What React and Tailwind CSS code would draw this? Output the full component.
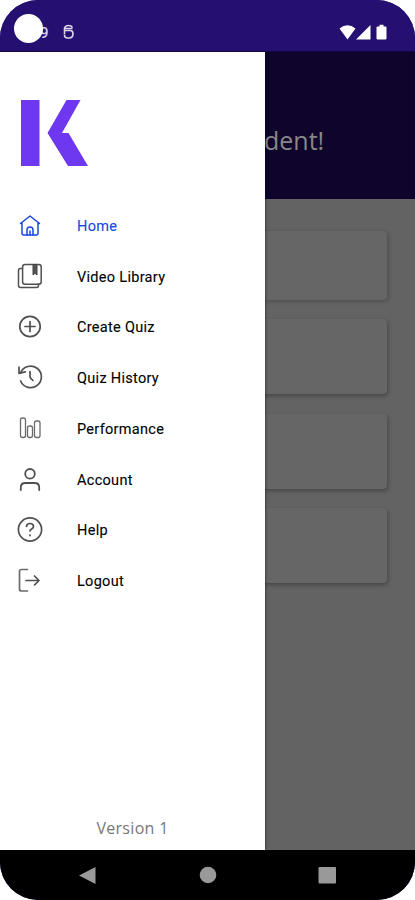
const icons = {
  home: (
    <g stroke="#1747dc" strokeWidth="1.5">
      <path d="M5.5 12.5 15 5l9.5 7.5M7 12v10.5q0 1.5 1.5 1.5h13q1.5 0 1.5-1.5V12" />
      <path d="M12 24v-5q0-3 3-3t3 3v5M15 20v4" />
    </g>
  ),
  library: (
    <g strokeWidth="1.5">
      <rect x="7.6" y="2.6" width="18.6" height="19.6" rx="2.5" />
      <path d="M7.5 6.5H5.5q-2 0-2 2v15q0 2 2 2h16q2 0 2-2v-1.5" />
      <path d="M18 3v10l2-1.7 2 1.7V3z" fill="#555" stroke="#444" strokeWidth="1" />
    </g>
  ),
  create: (
    <g strokeWidth="1.7">
      <circle cx="15" cy="14.5" r="10.2" />
      <path d="M10 14.5h10M15 9.5v10" />
    </g>
  ),
  history: (
    <g strokeWidth="1.7">
      <path d="M5.5 10A10.800 10.800 0 1 1 5.600 18" />
      <path d="M4 4v6.300l6.300-1.500" />
      <path d="M15 8.500v5q0 1 .8 1.800l2.200 2.200" />
    </g>
  ),
  performance: (
    <g strokeWidth="1.3" stroke="#6b6b6b">
      <rect x="5.5" y="4" width="5" height="19.5" rx="2" />
      <rect x="12.5" y="12" width="5" height="11.5" rx="2" />
      <rect x="19.5" y="7" width="5.5" height="16.5" rx="2" />
    </g>
  ),
  account: (
    <g strokeWidth="1.8">
      <circle cx="15" cy="8.8" r="4.8" />
      <path d="M5.8 25v-2.500q0-4.500 4.500-4.500h9.400q4.500 0 4.500 4.500V25" />
    </g>
  ),
  help: (
    <g strokeWidth="1.7">
      <circle cx="15" cy="14.5" r="11.6" />
      <path d="M11.500 11.500q.3-3 3.500-3 3.500 0 3.500 2.800 0 1.700-1.800 2.700-1.700 1-1.700 2" />
      <path d="M15 20v.6" />
    </g>
  ),
  logout: (
    <g strokeWidth="1.7">
      <path d="M12.500 3.500h-6q-2 0-2 2v17.500q0 2 2 2h6" stroke="#6b6b6b" />
      <path d="M11 14.500h13M19.500 10l4.500 4.500-4.500 4.500" />
    </g>
  ),
};

const menu = [
  { label: "Home", icon: "home", active: true },
  { label: "Video Library", icon: "library" },
  { label: "Create Quiz", icon: "create" },
  { label: "Quiz History", icon: "history" },
  { label: "Performance", icon: "performance" },
  { label: "Account", icon: "account" },
  { label: "Help", icon: "help" },
  { label: "Logout", icon: "logout" },
];

function MenuItem({ item }) {
  return (
    <li className="flex h-[50.75px] items-center pl-[15px]">
      <svg viewBox="0 0 30 30" className="h-[30px] w-[30px] shrink-0" fill="none" stroke="#505050" strokeLinecap="round" strokeLinejoin="round">
        {icons[item.icon]}
      </svg>
      <span className={`ml-8 pt-0.5 font-['Roboto',sans-serif] text-[14.5px] leading-5 tracking-[0.3px] [-webkit-text-stroke-width:0.1px] ${item.active ? "text-[#1747dc]" : "text-black"}`}>
        {item.label}
      </span>
    </li>
  );
}

function StatusBar() {
  return (
    <header className="flex h-[51px] shrink-0 items-start justify-between bg-[#250f70]">
      <svg viewBox="0 0 100 51" className="h-[51px] w-[100px]" fill="white">
        <text x="40" y="38" className="font-['Roboto',sans-serif] text-[15px] font-medium" fill="#d6d0ec">9</text>
        <circle cx="28.5" cy="28.5" r="14.5" />
        <path d="M72.500 27.500q-1-2-4-2t-4 2.500v2.500h6q2.500 0 2.500 3.500t-3 4h-2.500q-3 0-3-3M64.500 31v3.500M64.500 28.500h8" fill="none" stroke="#d9d4ea" strokeWidth="1.6" />
      </svg>
      <svg viewBox="335 0 80 51" className="h-[51px] w-20" fill="white">
        <path d="M339.500 28.500q8-6.500 16 0l-8 11z" />
        <path d="M370.500 25v14.500h-14.500z" />
        <path d="M377.500 26.500h2v-1.800h4v1.800h2q1 0 1 1v11q0 1-1 1h-8q-1 0-1-1v-11q0-1 1-1z" />
      </svg>
    </header>
  );
}

function Drawer() {
  return (
    <nav className="z-10 flex w-[265px] shrink-0 flex-col bg-white shadow-[0_0_3px_rgba(0,0,0,0.65)]">
      <svg viewBox="0 0 68 68" className="mt-12 ml-[21px] h-[68px] w-[68px]" fill="#6d38f0">
        <path d="M0 0h18.500v66H0zM45.500 0h14L41 33h6.500l19.500 33H47L26.500 33z" />
      </svg>
      <ul className="mt-[32.6px]">
        {menu.map((item) => <MenuItem key={item.label} item={item} />)}
      </ul>
      <p className="mt-auto mb-[10px] text-center font-['Open_Sans',sans-serif] text-[16px] leading-6 tracking-[0.3px] text-[#777]">Version 1</p>
    </nav>
  );
}

function Page() {
  return (
    <main className="min-w-0 flex-1 overflow-hidden bg-[#636363]">
      <div className="flex h-[147px] items-center bg-[#0e042c] pt-[29px]">
        <span className="-ml-px font-['Open_Sans',sans-serif] text-[25px] leading-none text-[#888]">dent!</span>
      </div>
      <div className="-ml-4 flex w-[138px] flex-col gap-[19.3px] pt-8">
        <div className="h-[69px] rounded bg-[#666] shadow-[1px_1px_4px_rgba(0,0,0,0.25)]" />
        <div className="h-[75px] rounded bg-[#666] shadow-[1px_2px_4px_rgba(0,0,0,0.3)]" />
        <div className="h-[75px] rounded bg-[#666] shadow-[1px_2px_4px_rgba(0,0,0,0.3)]" />
        <div className="h-[75px] rounded bg-[#666] shadow-[1px_2px_4px_rgba(0,0,0,0.3)]" />
      </div>
    </main>
  );
}

export default function App() {
  return (
    <div className="h-[900px] w-[415px] bg-white">
      <div className="flex h-full flex-col overflow-hidden rounded-[38px] bg-[#250f70]">
        <StatusBar />
        <div className="flex min-h-0 flex-1 overflow-hidden border-t border-[#13083a]">
          <Drawer />
          <Page />
        </div>
        <footer className="flex h-[50px] shrink-0 bg-black">
          <svg viewBox="0 0 415 50" className="h-[50px] w-full" fill="#999">
            <path d="M79 25.500 95.500 17v17z" />
            <circle cx="208" cy="25" r="8.300" />
            <rect x="318.500" y="17" width="17.500" height="16.500" rx="1" />
          </svg>
        </footer>
      </div>
    </div>
  );
}
